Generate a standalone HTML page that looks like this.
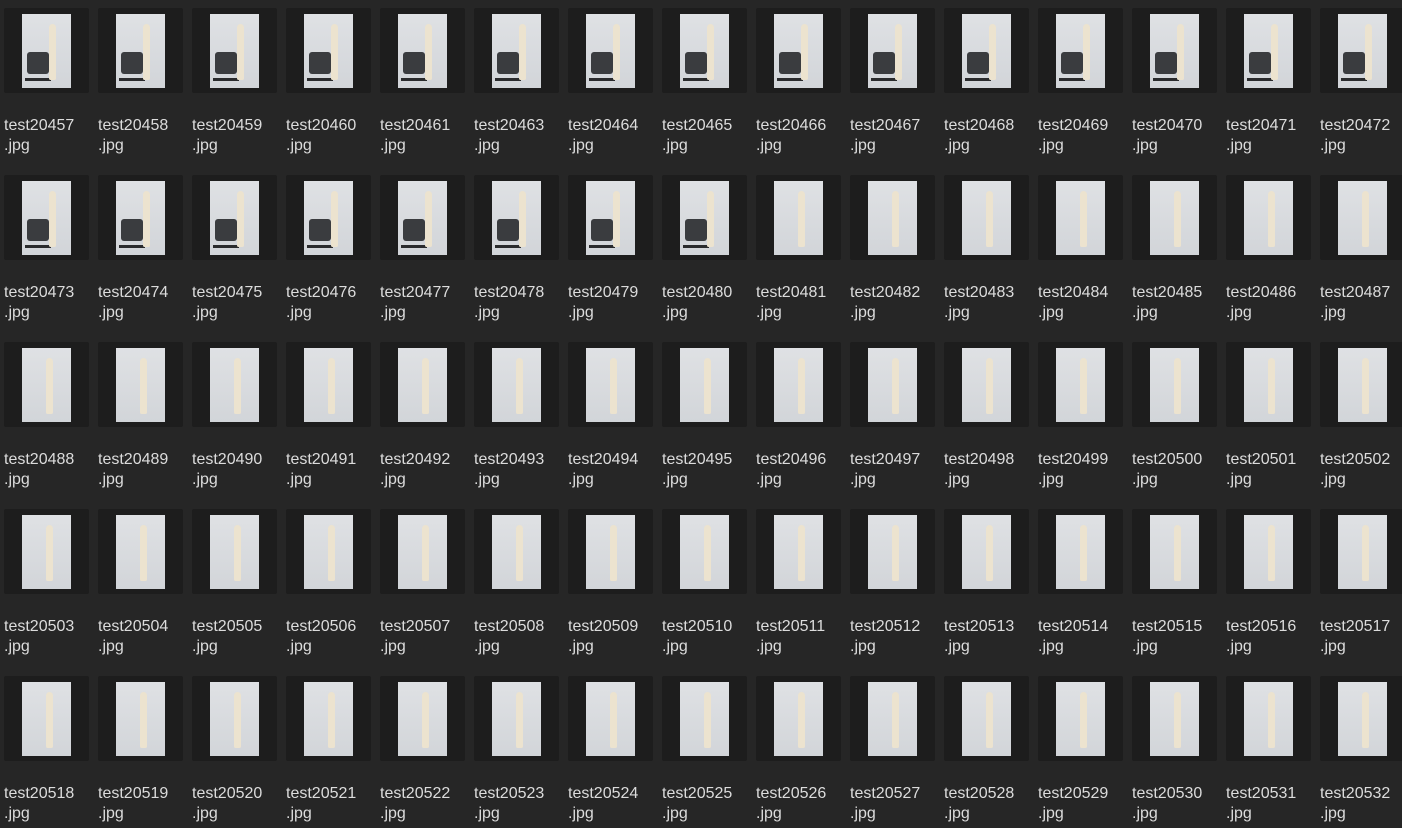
<!DOCTYPE html>
<html><head><meta charset="utf-8"><style>
html,body{margin:0;padding:0;background:#262626;width:1402px;height:828px;overflow:hidden}
.g{display:grid;grid-template-columns:repeat(15,94px);grid-auto-rows:167px;padding:8px 0 0 4px}
.c{width:94px}
.t{display:block;width:85px;height:85px;background:#1d1d1d;border-radius:2px;position:relative}
.t::before{content:"";position:absolute;left:18px;top:6px;width:49px;height:74px;background:linear-gradient(#dfe1e4,#d2d5d9)}
.t::after{content:"";position:absolute;left:42px;top:16px;width:7px;height:56px;background:#ece3cf;border-radius:4px 4px 2px 2px}
.k .t::after{left:45px}
.k .t b{position:absolute;left:23px;top:44px;width:22px;height:22px;background:#3a3c3f;border-radius:3px}
.k .t b::after{content:"";position:absolute;left:-2px;top:26px;width:26px;height:3px;background:#2a2b2d}
p{margin:23px 0 0;font:16px/20px "Liberation Sans",sans-serif;color:#dcdcdc;white-space:nowrap}
</style></head><body><div class="g">
<div class="c k"><i class="t"><b></b></i><p>test20457<br>.jpg</p></div>
<div class="c k"><i class="t"><b></b></i><p>test20458<br>.jpg</p></div>
<div class="c k"><i class="t"><b></b></i><p>test20459<br>.jpg</p></div>
<div class="c k"><i class="t"><b></b></i><p>test20460<br>.jpg</p></div>
<div class="c k"><i class="t"><b></b></i><p>test20461<br>.jpg</p></div>
<div class="c k"><i class="t"><b></b></i><p>test20463<br>.jpg</p></div>
<div class="c k"><i class="t"><b></b></i><p>test20464<br>.jpg</p></div>
<div class="c k"><i class="t"><b></b></i><p>test20465<br>.jpg</p></div>
<div class="c k"><i class="t"><b></b></i><p>test20466<br>.jpg</p></div>
<div class="c k"><i class="t"><b></b></i><p>test20467<br>.jpg</p></div>
<div class="c k"><i class="t"><b></b></i><p>test20468<br>.jpg</p></div>
<div class="c k"><i class="t"><b></b></i><p>test20469<br>.jpg</p></div>
<div class="c k"><i class="t"><b></b></i><p>test20470<br>.jpg</p></div>
<div class="c k"><i class="t"><b></b></i><p>test20471<br>.jpg</p></div>
<div class="c k"><i class="t"><b></b></i><p>test20472<br>.jpg</p></div>
<div class="c k"><i class="t"><b></b></i><p>test20473<br>.jpg</p></div>
<div class="c k"><i class="t"><b></b></i><p>test20474<br>.jpg</p></div>
<div class="c k"><i class="t"><b></b></i><p>test20475<br>.jpg</p></div>
<div class="c k"><i class="t"><b></b></i><p>test20476<br>.jpg</p></div>
<div class="c k"><i class="t"><b></b></i><p>test20477<br>.jpg</p></div>
<div class="c k"><i class="t"><b></b></i><p>test20478<br>.jpg</p></div>
<div class="c k"><i class="t"><b></b></i><p>test20479<br>.jpg</p></div>
<div class="c k"><i class="t"><b></b></i><p>test20480<br>.jpg</p></div>
<div class="c"><i class="t"></i><p>test20481<br>.jpg</p></div>
<div class="c"><i class="t"></i><p>test20482<br>.jpg</p></div>
<div class="c"><i class="t"></i><p>test20483<br>.jpg</p></div>
<div class="c"><i class="t"></i><p>test20484<br>.jpg</p></div>
<div class="c"><i class="t"></i><p>test20485<br>.jpg</p></div>
<div class="c"><i class="t"></i><p>test20486<br>.jpg</p></div>
<div class="c"><i class="t"></i><p>test20487<br>.jpg</p></div>
<div class="c"><i class="t"></i><p>test20488<br>.jpg</p></div>
<div class="c"><i class="t"></i><p>test20489<br>.jpg</p></div>
<div class="c"><i class="t"></i><p>test20490<br>.jpg</p></div>
<div class="c"><i class="t"></i><p>test20491<br>.jpg</p></div>
<div class="c"><i class="t"></i><p>test20492<br>.jpg</p></div>
<div class="c"><i class="t"></i><p>test20493<br>.jpg</p></div>
<div class="c"><i class="t"></i><p>test20494<br>.jpg</p></div>
<div class="c"><i class="t"></i><p>test20495<br>.jpg</p></div>
<div class="c"><i class="t"></i><p>test20496<br>.jpg</p></div>
<div class="c"><i class="t"></i><p>test20497<br>.jpg</p></div>
<div class="c"><i class="t"></i><p>test20498<br>.jpg</p></div>
<div class="c"><i class="t"></i><p>test20499<br>.jpg</p></div>
<div class="c"><i class="t"></i><p>test20500<br>.jpg</p></div>
<div class="c"><i class="t"></i><p>test20501<br>.jpg</p></div>
<div class="c"><i class="t"></i><p>test20502<br>.jpg</p></div>
<div class="c"><i class="t"></i><p>test20503<br>.jpg</p></div>
<div class="c"><i class="t"></i><p>test20504<br>.jpg</p></div>
<div class="c"><i class="t"></i><p>test20505<br>.jpg</p></div>
<div class="c"><i class="t"></i><p>test20506<br>.jpg</p></div>
<div class="c"><i class="t"></i><p>test20507<br>.jpg</p></div>
<div class="c"><i class="t"></i><p>test20508<br>.jpg</p></div>
<div class="c"><i class="t"></i><p>test20509<br>.jpg</p></div>
<div class="c"><i class="t"></i><p>test20510<br>.jpg</p></div>
<div class="c"><i class="t"></i><p>test20511<br>.jpg</p></div>
<div class="c"><i class="t"></i><p>test20512<br>.jpg</p></div>
<div class="c"><i class="t"></i><p>test20513<br>.jpg</p></div>
<div class="c"><i class="t"></i><p>test20514<br>.jpg</p></div>
<div class="c"><i class="t"></i><p>test20515<br>.jpg</p></div>
<div class="c"><i class="t"></i><p>test20516<br>.jpg</p></div>
<div class="c"><i class="t"></i><p>test20517<br>.jpg</p></div>
<div class="c"><i class="t"></i><p>test20518<br>.jpg</p></div>
<div class="c"><i class="t"></i><p>test20519<br>.jpg</p></div>
<div class="c"><i class="t"></i><p>test20520<br>.jpg</p></div>
<div class="c"><i class="t"></i><p>test20521<br>.jpg</p></div>
<div class="c"><i class="t"></i><p>test20522<br>.jpg</p></div>
<div class="c"><i class="t"></i><p>test20523<br>.jpg</p></div>
<div class="c"><i class="t"></i><p>test20524<br>.jpg</p></div>
<div class="c"><i class="t"></i><p>test20525<br>.jpg</p></div>
<div class="c"><i class="t"></i><p>test20526<br>.jpg</p></div>
<div class="c"><i class="t"></i><p>test20527<br>.jpg</p></div>
<div class="c"><i class="t"></i><p>test20528<br>.jpg</p></div>
<div class="c"><i class="t"></i><p>test20529<br>.jpg</p></div>
<div class="c"><i class="t"></i><p>test20530<br>.jpg</p></div>
<div class="c"><i class="t"></i><p>test20531<br>.jpg</p></div>
<div class="c"><i class="t"></i><p>test20532<br>.jpg</p></div>
</div></body></html>
